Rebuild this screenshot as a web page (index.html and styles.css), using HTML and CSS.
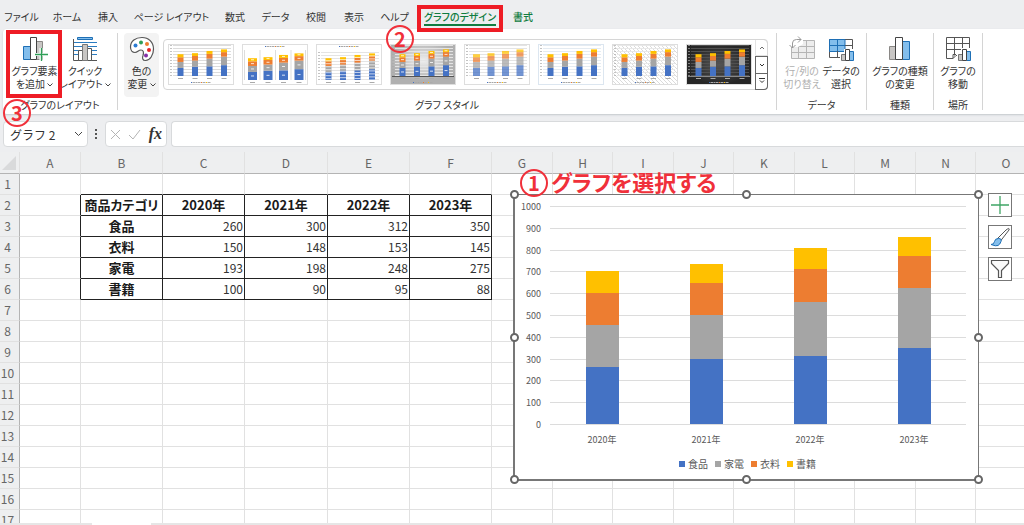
FILE: index.html
```html
<!DOCTYPE html>
<html lang="ja">
<head>
    <meta charset="UTF-8">
    <title>グラフのデザイン</title>
    <link rel="stylesheet" href="styles.css">
</head>
<body>

    <nav class="tabs">
        <a href="#">ファイル</a>
        <a href="#">ホーム</a>
        <a href="#">挿入</a>
        <a href="#">ページ レイアウト</a>
        <a href="#">数式</a>
        <a href="#">データ</a>
        <a href="#">校閲</a>
        <a href="#">表示</a>
        <a href="#">ヘルプ</a>
        <a href="#" class="context active">グラフのデザイン<i class="frame frame-tab"></i><b class="step step-2">2</b></a>
        <a href="#" class="context">書式</a>
    </nav>

    <div class="ribbon">
        <section class="group group-layout">
            <div class="tools">
                <button class="tool tool-add">
                    <svg width="26" height="26" viewBox="0 0 26 26">
                        <path d="M14.500 5.500h6v18h-6z" fill="#c8c6c4" stroke="#8a8886"/>
                        <path d="M1.500 10.500h7v13h-7z" fill="#83beec" stroke="#1e6fb5"/>
                        <path d="M8.500 1.500h6v22h-6z" fill="#fff" stroke="#444"/>
                        <path d="M19 12v13M12.500 18.500h13" stroke="#fff" stroke-width="3"/>
                        <path d="M19.500 12v13M13 18.500h13" stroke="#2f9e57" stroke-width="1.300"/>
                    </svg>
                    <span>グラフ要素<br>を追加 <svg class="caret" viewBox="0 0 6 4"><path d="M.5.5 3 3 5.500.5"/></svg></span>
                    <i class="frame frame-tool"></i>
                </button>
                <button class="tool">
                    <svg width="26" height="26" viewBox="0 0 26 26">
                        <path d="M5.500 1.500h15v2h-15z" fill="#83beec" stroke="#1e6fb5"/>
                        <path d="M2 6.500h23M2 10.500h23M2 14.500h23M2 18.500h23" stroke="#2b7cc0"/>
                        <path d="M1.500 3v21.500H25" fill="none" stroke="#555"/>
                        <path d="M6.500 14.500h4v10h-4zM15.500 12.500h4v12h-4z" fill="#fff" stroke="#555"/>
                        <path d="M10.500 8.500h5v16h-5z" fill="#c8c6c4" stroke="#777"/>
                    </svg>
                    <span>クイック<br>レイアウト <svg class="caret" viewBox="0 0 6 4"><path d="M.5.5 3 3 5.500.5"/></svg></span>
                </button>
            </div>
            <h2>グラフのレイアウト</h2>
            <b class="step step-3">3</b>
        </section>

        <section class="group group-style">
            <div class="tools">
                <button class="tool tool-color">
                    <svg width="26" height="26" viewBox="0 0 26 26">
                        <path d="M1.500 11C1.500 5 6.500 1.500 13 1.500S24.500 6 24.500 13c0 6-3.500 11.500-8 11.500-3 0-3.500-2.500-2.500-5 1-2.800.5-5.500-2-5.500-2.600 0-3.500 2.500-6 2.500s-4.500-2-4.500-5.500z" fill="#fff" stroke="#555" stroke-width="1.200"/>
                        <circle cx="6.500" cy="9.500" r="2" fill="#2b7cd3"/>
                        <circle cx="12" cy="6.500" r="2" fill="#2f9e57"/>
                        <circle cx="18" cy="8" r="2" fill="#ed7d31"/>
                        <circle cx="20" cy="14" r="2" fill="#e3242b"/>
                        <circle cx="17" cy="19.500" r="2" fill="#8430a8"/>
                    </svg>
                    <span>色の<br>変更 <svg class="caret" viewBox="0 0 6 4"><path d="M.5.5 3 3 5.500.5"/></svg></span>
                </button>
                <div class="gallery">
                    <div class="thumbs" id="thumbs"></div>
                    <div class="scroll">
                        <button disabled aria-label="上へ"><svg viewBox="0 0 8 6"><path d="M2 4 4 2l2 2"/></svg></button>
                        <button aria-label="下へ"><svg viewBox="0 0 8 6"><path d="M2 2l2 2 2-2"/></svg></button>
                        <button aria-label="その他"><svg viewBox="0 0 8 6"><path d="M1 .5h6M2 2.500l2 2 2-2"/></svg></button>
                    </div>
                </div>
            </div>
            <h2>グラフ スタイル</h2>
        </section>

        <section class="group group-data">
            <div class="tools">
                <button class="tool" disabled>
                    <svg width="26" height="26" viewBox="0 0 26 26">
                        <path d="M2.500 4.500h23v18h-23z" fill="#ededed" stroke="#b5b5b5"/>
                        <path d="M2.500 10.500h23M2.500 16.500h23M9.500 4.500v18M17.500 4.500v18" stroke="#b5b5b5"/>
                        <path d="M0 0h14v8l-5 3H0z" fill="#fff"/>
                        <path d="M3.500 12V7q0-3.500 4-3.500H12M9 .5l3 3-3 3M.5 9l3 3 3-3" fill="none" stroke="#999"/>
                    </svg>
                    <span>行/列の<br>切り替え</span>
                </button>
                <button class="tool">
                    <svg width="26" height="26" viewBox="0 0 26 26">
                        <path d="M1.500 3.500h23v18h-23z" fill="#fff" stroke="#555"/>
                        <path d="M1.500 3.500h15.500v12H1.500z" fill="#83beec"/>
                        <path d="M1.500 3.500h15.500M1.500 9.500h15.500M1.500 15.500h15.500M1.500 3.500v12M9.500 3.500v12M17 3.500v12" stroke="#1e6fb5"/>
                        <path d="M17 9.500h7.500M9.500 15v6" stroke="#555"/>
                        <path d="M12 18h4v-5h9v13H12z" fill="#fff"/>
                        <path d="M13.500 18.500h4v6h-4z" fill="#c8c6c4" stroke="#777"/>
                        <path d="M21.500 15.500h4v9h-4z" fill="#83beec" stroke="#1e6fb5"/>
                        <path d="M17.500 13.500h4v11h-4z" fill="#fff" stroke="#444"/>
                    </svg>
                    <span>データの<br>選択</span>
                </button>
            </div>
            <h2>データ</h2>
        </section>

        <section class="group group-type">
            <div class="tools">
                <button class="tool">
                    <svg width="26" height="26" viewBox="0 0 26 26">
                        <path d="M2.500 10.500h6v13h-6z" fill="#c8c6c4" stroke="#8a8886"/>
                        <path d="M15.500 5.500h7v18h-7z" fill="#83beec" stroke="#1e6fb5"/>
                        <path d="M8.500 1.500h7v22h-7z" fill="#fff" stroke="#444"/>
                    </svg>
                    <span>グラフの種類<br>の変更</span>
                </button>
            </div>
            <h2>種類</h2>
        </section>

        <section class="group group-place">
            <div class="tools">
                <button class="tool">
                    <svg width="26" height="26" viewBox="0 0 26 26">
                        <path d="M1.500 1.500h23v18H11l-3 3H1.500z" fill="#fff" stroke="#555"/>
                        <path d="M1.500 7.500h23M1.500 13.500h23M9.500 1.500v18M17.500 1.500v12M8 22.500v-4h3" fill="none" stroke="#555"/>
                        <path d="M12 18h4v-6h10v14H12z" fill="#fff"/>
                        <path d="M13.500 18.500h4v6h-4z" fill="#c8c6c4" stroke="#777"/>
                        <path d="M21.500 15.500h4v9h-4z" fill="#83beec" stroke="#1e6fb5"/>
                        <path d="M17.500 13.500h4v11h-4z" fill="#fff" stroke="#444"/>
                    </svg>
                    <span>グラフの<br>移動</span>
                </button>
            </div>
            <h2>場所</h2>
        </section>
    </div>

    <div class="formula">
        <div class="box name-box">
            <input type="text" value="グラフ 2" aria-label="名前ボックス">
            <button aria-label="名前の一覧"><svg width="9" height="6" viewBox="0 0 9 6"><path d="M1 1l3.500 3.500L8 1"/></svg></button>
        </div>
        <svg class="dots" width="3" height="10" viewBox="0 0 3 10"><path d="M0 0h2v2H0zM0 4h2v2H0zM0 8h2v2H0z"/></svg>
        <div class="box fx-box">
            <button disabled aria-label="キャンセル"><svg width="11" height="11" viewBox="0 0 11 11"><path d="M1 1l9 9M10 1l-9 9"/></svg></button>
            <button disabled aria-label="入力"><svg width="13" height="11" viewBox="0 0 13 11"><path d="M1 6l4 4 7-9"/></svg></button>
            <button class="fx">fx</button>
        </div>
        <input class="box formula-input" type="text" aria-label="数式バー">
    </div>

    <main class="sheet" id="sheet">
        <table class="grid" id="grid"></table>

        <p class="note"><b class="step">1</b>グラフを選択する</p>

        <div class="chart">
            <div class="axis" id="axis"></div>
            <div class="plot" id="plot"></div>
            <div class="categories" id="categories"></div>
            <div class="legend" id="legend"></div>
            <i class="handle n w"></i><i class="handle n"></i><i class="handle n e"></i>
            <i class="handle w"></i><i class="handle e"></i>
            <i class="handle s w"></i><i class="handle s"></i><i class="handle s e"></i>
            <div class="side">
                <button aria-label="グラフ要素"><svg width="22" height="22" viewBox="0 0 22 22"><path d="M11 2v18M2 11h18" stroke="#3fa565" stroke-width="1.300"/></svg></button>
                <button aria-label="グラフ スタイル"><svg width="22" height="22" viewBox="0 0 22 22"><path d="M8.500 12.500 17 4q4-3 3 0l-8.500 11z" fill="#fff" stroke="#555"/><path d="M2 18.500q3 0 3.500-3t4-3 2.500 3-3 4-7-1z" fill="#83beec" stroke="#1e6fb5"/></svg></button>
                <button aria-label="グラフ フィルター"><svg width="22" height="22" viewBox="0 0 22 22"><path d="M2.500 2.500h17v3l-7 7v7h-3v-7l-7-7z" fill="#fafafa" stroke="#555" stroke-width="1.200"/></svg></button>
            </div>
        </div>
    </main>

    <footer class="sheet-tabs"><div></div></footer>

    <script src="script.js"></script>
</body>
</html>
```

FILE: styles.css
```css
* {
    box-sizing: border-box;
}

:root {
    --red: #ee1c25;
    --green: #107c41;
    --line: #e1e1e1;
    --bar: #edeef0;
    --blue: #4472c4;
    --gray: #a5a5a5;
    --orange: #ed7d31;
    --yellow: #ffc000;
}

body {
    margin: 0;
    height: 100vh;
    display: flex;
    flex-direction: column;
    overflow: hidden;
    background: var(--bar);
    color: #333;
    font: 10px/13px "Noto Sans CJK JP", sans-serif;
    font-feature-settings: "palt";
}
button, input {
    font: inherit;
    color: inherit;
    font-feature-settings: inherit;
    margin: 0;
    padding: 0;
    border: 0;
    background: none;
}
button {
    display: flex;
    align-items: center;
    justify-content: center;
}
h2, p {
    margin: 0;
    font-size: 10px;
    font-weight: normal;
}

/* tabs */
.tabs {
    flex: none;
    height: 29px;
    padding: 8px 0 0 6px;
    display: grid;
    grid-template-columns: 31px 28px 22px 73px 22px 27px 22px 22px 27px 72px 22px;
    column-gap: 16px;
    justify-items: center;
}
.tabs a {
    position: relative;
    height: 18px;
    line-height: 18px;
    display: flex;
    justify-content: center;
    white-space: nowrap;
    color: #333;
    text-decoration: none;
}
.tabs .context {
    color: var(--green);
    font-weight: 500;
}
.tabs .active {
    width: 100%;
    border-bottom: 2px solid var(--green);
}

/* red marks */
.frame {
    position: absolute;
    z-index: 2;
    border: 4px solid var(--red);
}
.frame-tab {
    inset: -3px -7px -8px;
}
.frame-tool {
    inset: -3px 0 -1px 3px;
}
.step {
    width: 28px;
    height: 28px;
    flex: none;
    border: 2px solid #f0303a;
    border-radius: 50%;
    color: #f0303a;
    font: bold 20px/24px "Noto Sans CJK JP", sans-serif;
    text-align: center;
}
.step-2, .step-3 {
    position: absolute;
    z-index: 3;
}
.step-2 {
    left: -38px;
    top: 17px;
}
.step-3 {
    left: 0;
    bottom: -17px;
}

/* ribbon */
.ribbon {
    flex: none;
    height: 85px;
    margin-left: 3px;
    padding: 4px 0;
    display: flex;
    background: #fff;
    border-radius: 4px 0 0 4px;
    box-shadow: 0 1px 2px #c4c8cc;
}
.group {
    position: relative;
    display: flex;
    flex-direction: column;
    justify-content: space-between;
    border-right: 1px solid #d4d4d4;
}
.group h2 {
    text-align: center;
    line-height: 11px;
}
.group-layout { width: 115px; }
.group-style { width: 659px; }
.group-data { width: 90px; }
.group-type { width: 67px; }
.group-place { width: 49px; }
.tools {
    display: flex;
    justify-content: center;
}
.tool {
    position: relative;
    height: 64px;
    flex-direction: column;
    justify-content: flex-start;
    padding-top: 3px;
    gap: 2px;
    white-space: nowrap;
    text-align: center;
}
.tool:disabled {
    color: #b0b0b0;
}
.group-layout .tools,
.group-style .tools {
    justify-content: flex-start;
}
.group-style .tools {
    padding-left: 6px;
}
.group-layout .tool {
    width: 46px;
}
.group-layout .tool-add {
    width: 59px;
    padding-left: 4px;
}
.tool-color {
    width: 35px;
    margin-right: 4px;
    background: #f3f3f3;
    border-radius: 4px;
}
.group-data .tool {
    width: 39px;
}
.caret {
    width: 6px;
    height: 4px;
    margin-bottom: 1px;
    fill: none;
    stroke: #444;
}

.gallery {
    height: 51px;
    margin-top: 6px;
    display: flex;
    border: 1px solid #d6d6d6;
    border-radius: 4px;
}
.thumbs {
    display: flex;
    gap: 8px;
    padding: 4px 3px 4px 4px;
}
.scroll {
    width: 13px;
    margin: -1px -1px -1px 0;
    display: flex;
    flex-direction: column;
}
.scroll button {
    flex: 1;
    border: 1px solid #666;
}
.scroll button + button + button {
    border-radius: 0 0 4px 0;
    border-top: 0;
}
.scroll button:disabled {
    border-color: #d6d6d6;
    border-radius: 0 4px 0 0;
    opacity: .7;
}
.scroll svg {
    width: 8px;
    height: 6px;
    fill: none;
    stroke: #333;
}

/* formula bar */
.formula {
    flex: none;
    height: 38px;
    padding: 7px 0 5px 3px;
    display: flex;
    align-items: center;
    font-size: 12px;
}
.box {
    height: 26px;
    display: flex;
    background: #fff;
    border: 1px solid #d8dadc;
    border-radius: 4px;
}
.box svg {
    fill: none;
    stroke: #444;
}
.name-box {
    width: 85px;
    padding: 0 4px 0 6px;
    font-feature-settings: normal;
}
.name-box input {
    flex: 1;
    min-width: 0;
}
.dots {
    margin: 0 7px;
    fill: #555;
}
.fx-box {
    width: 62px;
    margin-right: 4px;
    padding: 0 4px;
    justify-content: space-between;
}
.fx-box button:disabled svg {
    stroke: #b4b4b4;
}
.fx {
    font: italic bold 16px/22px "Liberation Serif", serif;
}
.formula-input {
    flex: 1;
    min-width: 0;
    border-right: 0;
    border-radius: 4px 0 0 4px;
}

/* worksheet */
.sheet {
    position: relative;
    flex: 1;
    min-height: 0;
    overflow: hidden;
    background: #fff;
}
.grid {
    table-layout: fixed;
    width: 0;
    border-spacing: 0;
    font-size: 12px;
    line-height: 20px;
    white-space: nowrap;
}
.grid th, .grid td {
    height: 21px;
    padding: 0 1px;
    border-right: 1px solid var(--line);
    border-bottom: 1px solid var(--line);
}
.grid thead th {
    height: 22px;
    background: #eeeff0;
    border-bottom-color: #b4b4b4;
    color: #666;
    font-weight: normal;
}
.grid tbody th[scope=row] {
    padding: 0 4px 0 0;
    background: #eeeff0;
    border-right-color: #b4b4b4;
    color: #666;
    font-weight: normal;
}
.grid thead .corner {
    padding: 0 3px 0 0;
    text-align: right;
}
.corner svg {
    display: block;
    margin-left: auto;
    fill: #d9dadb;
}
.grid td {
    text-align: right;
}
.grid .title {
    color: #1a1a1a;
    font-size: 13px;
    font-weight: bold;
    text-align: center;
}
.grid .edge-right { border-right-color: #222; }
.grid .edge-bottom { border-bottom-color: #222; }

.note {
    position: absolute;
    left: 520px;
    top: 17px;
    display: flex;
    gap: 3px;
    color: #f0303a;
    font-size: 22px;
    font-weight: bold;
    line-height: 25px;
    white-space: nowrap;
    z-index: 2;
}

/* chart */
.chart {
    position: absolute;
    left: 513px;
    top: 42px;
    width: 466px;
    height: 287px;
    padding: 11px 12px 0 4px;
    display: grid;
    grid-template-columns: 22px 416px;
    grid-template-rows: 219px 29px 19px;
    column-gap: 9px;
    background: #fff;
    border: 1px solid #777;
    border-left-width: 2px;
    border-bottom-width: 2px;
    color: #595959;
    font-size: 9px;
}
.axis {
    display: flex;
    flex-direction: column;
    justify-content: space-between;
    margin: -6px 0;
    text-align: right;
}
.plot {
    position: relative;
    display: flex;
    justify-content: space-around;
    padding-bottom: 1px;
}
.lines {
    position: absolute;
    inset: 0;
    display: flex;
    flex-direction: column;
    justify-content: space-between;
}
.lines i {
    height: 1px;
    background: #dcdcdc;
}
.stack {
    position: relative;
    width: 33px;
    display: flex;
    flex-direction: column-reverse;
}
.c0 { background: var(--blue); }
.c1 { background: var(--gray); }
.c2 { background: var(--orange); }
.c3 { background: var(--yellow); }
.categories {
    grid-column: 2;
    display: flex;
    align-items: center;
}
.categories span {
    flex: 1;
    text-align: center;
}
.legend {
    grid-column: 1 / -1;
    display: flex;
    align-items: center;
    justify-content: center;
    gap: 7px;
    padding-left: 10px;
    font-size: 10px;
}
.legend span {
    display: flex;
    align-items: center;
    gap: 3px;
}
.legend i {
    width: 6px;
    height: 6px;
}

.handle {
    position: absolute;
    left: calc(50% - 5px);
    top: calc(50% - 4px);
    width: 9px;
    height: 9px;
    border: 2px solid #666;
    border-radius: 50%;
    background: #fff;
}
.handle.n { top: -5px; }
.handle.s { top: auto; bottom: -5px; }
.handle.w { left: -5px; }
.handle.e { left: auto; right: -5px; }

.side {
    position: absolute;
    left: calc(100% + 10px);
    top: -2px;
    display: flex;
    flex-direction: column;
    gap: 8px;
}
.side button {
    width: 24px;
    height: 24px;
    background: #fff;
    border: 1px solid #777;
}

.sheet-tabs {
    flex: none;
    height: 2px;
    padding-left: 92px;
    background: #e6e6e6;
}
.sheet-tabs div {
    width: 59px;
    height: 2px;
    background: #fff;
}
```

FILE: script.js
```js
const years = ['2020年', '2021年', '2022年', '2023年'];
const sales = [
    ['食品', 260, 300, 312, 350],
    ['衣料', 150, 148, 153, 145],
    ['家電', 193, 198, 248, 275],
    ['書籍', 100, 90, 95, 88],
];
// stacking order, bottom to top
const series = [sales[0], sales[2], sales[1], sales[3]];
const byId = id => document.getElementById(id);

// worksheet: as many columns and rows as the window shows
const widths = [61, 82, 82, 83, 82, 82];
let total = 20 + widths.reduce((a, b) => a + b);
while (total < byId('sheet').clientWidth && widths.length < 26) {
    const w = widths.length % 2 ? 60 : 61;
    widths.push(w);
    total += w;
}
const rows = Math.ceil((byId('sheet').clientHeight - 22) / 21);
const letters = widths.map((w, i) => String.fromCharCode(65 + i));
const cells = [['商品カテゴリ', ...years], ...sales];

function cell(row, col) {
    const inRows = row >= 2 && row <= 6;
    const inCols = col >= 1 && col <= 5;
    const cls = [];
    if (inRows && col <= 5) cls.push('edge-right');
    if (inCols && row <= 6) cls.push('edge-bottom');
    if (!inRows || !inCols) return `<td class="${cls.join(' ')}"></td>`;
    if (row > 2 && col > 1) return `<td class="${cls.join(' ')}">${cells[row - 2][col - 1]}</td>`;
    return `<th class="title ${cls.join(' ')}">${cells[row - 2][col - 1]}</th>`;
}

let body = '';
for (let row = 1; row <= rows; row++) {
    body += `<tr><th scope="row">${row}</th>${letters.map((l, col) => cell(row, col)).join('')}</tr>`;
}
byId('grid').innerHTML = `
    <colgroup><col style="width:20px">${widths.map(w => `<col style="width:${w}px">`).join('')}</colgroup>
    <thead><tr><th class="corner"><svg width="14" height="14" viewBox="0 0 14 14"><path d="M14 0v14H0z"/></svg></th>
    ${letters.map(l => `<th>${l}</th>`).join('')}</tr></thead>
    <tbody>${body}</tbody>`;

// chart
let labels = '';
for (let v = 1000; v >= 0; v -= 100) labels += `<span>${v}</span>`;
byId('axis').innerHTML = labels;
byId('plot').innerHTML = `<div class="lines">${'<i></i>'.repeat(11)}</div>` + years.map((y, i) =>
    `<div class="stack">${series.map((s, k) => `<div class="c${k}" style="height:${s[i + 1] / 10}%"></div>`).join('')}</div>`
).join('');
byId('categories').innerHTML = years.map(y => `<span>${y}</span>`).join('');
byId('legend').innerHTML = series.map((s, k) => `<span><i class="c${k}"></i>${s[0]}</span>`).join('');

// style gallery
const colors = ['#4472c4', '#a5a5a5', '#ed7d31', '#ffc000'];
const looks = [
    { grid: '#dcdcdc', bar: 6 },
    { bar: 9, base: 36, top: true, marks: true, columns: true },
    { grid: '#e4e4e4', bar: 6, base: 36, top: true, stripes: true },
    { back: 'url(#silver)', grid: '#e4e4e4', bar: 6, marks: true, floor: '#555' },
    { grid: '#e4e4e4', bar: 7, soft: true },
    { grid: '#e4ebf2', bar: 6, frame: '#dce6f0' },
    { grid: '#e8e8e8', bar: 6, back: 'url(#hatch)' },
    { grid: '#505050', bar: 6, back: 'url(#dark)', ink: '#aaa', floor: '#888' },
];

function thumb(look) {
    const base = look.base || 32;
    const ink = look.ink || '#aaa';
    let out = `<rect width="66" height="41" fill="#fff"/><rect x=".5" y=".5" width="65" height="40" fill="${look.back || '#fff'}" stroke="${look.frame || '#dedede'}"/>`;
    if (look.grid) {
        for (let y = base; y > (look.top ? 6 : 1); y -= 3) {
            out += `<path d="M5 ${y - .5}h58" stroke="${look.grid}"/><path d="M2 ${y - .5}h2" stroke="${ink}" opacity=".7"/>`;
        }
    }
    if (look.columns) out += '<path d="M2.500 6v30M18 6v30M33.500 6v30M49 6v30M63.500 6v30" stroke="#ddd"/>';
    years.forEach((name, i) => {
        const mid = look.columns ? 10.5 + i * 15.5 : 12.5 + i * 14.5;
        let y = base;
        series.forEach((s, k) => {
            const h = s[i + 1] * .031;
            y -= h;
            out += `<rect x="${mid - look.bar / 2}" y="${y}" width="${look.bar}" height="${h}" fill="${colors[k]}" opacity="${look.soft ? .75 : 1}"/>`;
            if (look.marks) out += `<rect x="${mid - 1.5}" y="${y + h / 2 - .5}" width="3" height="1" fill="#fff" opacity=".8"/>`;
        });
        if (look.stripes) {
            for (let s = y + 2; s < base; s += 3) out += `<rect x="${mid - 3}" y="${s}" width="6" height="1" fill="#fff" opacity=".7"/>`;
        }
        out += `<rect x="${mid - 2.5}" y="${base + 2}" width="5" height="1" fill="${ink}"/>`;
    });
    if (look.floor) out += `<path d="M2 ${base + .5}h62" stroke="${look.floor}"/>`;
    const ly = look.top ? 2 : 38;
    colors.forEach((c, k) => {
        out += `<rect x="${23 + k * 5}" y="${ly}" width="1" height="1" fill="${c}"/><rect x="${24.5 + k * 5}" y="${ly}" width="3" height="1" fill="${ink}"/>`;
    });
    return `<svg width="66" height="41" viewBox="0 0 66 41">${out}</svg>`;
}

byId('thumbs').innerHTML = looks.map(thumb).join('') + `<svg width="0" height="0" style="position:absolute"><defs>
    <radialGradient id="silver" cy=".4"><stop offset="0" stop-color="#eee"/><stop offset="1" stop-color="#b0b0b0"/></radialGradient>
    <radialGradient id="dark"><stop offset="0" stop-color="#555"/><stop offset="1" stop-color="#262626"/></radialGradient>
    <pattern id="hatch" width="4" height="4" patternUnits="userSpaceOnUse"><path d="M0 0l4 4" stroke="#ccc" stroke-width=".7"/></pattern>
</defs></svg>`;
```
